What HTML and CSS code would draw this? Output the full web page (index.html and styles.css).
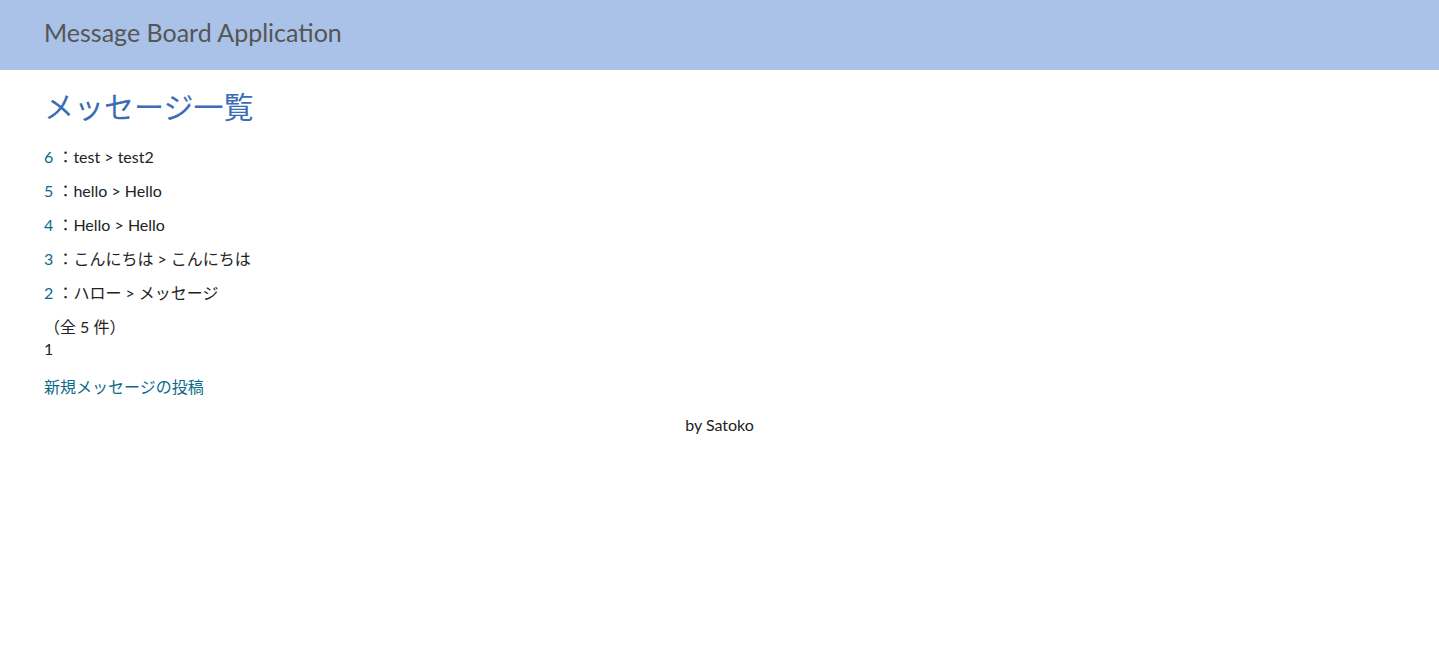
FILE: index.html
```html
<!DOCTYPE html>
<html lang="ja">
<head>
<meta charset="utf-8">
<title>Message Board Application</title>
<link rel="stylesheet" href="styles.css">
</head>
<body>
<header class="topbar">
  <span class="brand">Message Board Application</span>
</header>
<main class="content">
  <h1 class="title">メッセージ一覧</h1>
  <ul class="messages">
    <li class="msg"><a class="num" href="#">6</a> ：test &gt; test2</li>
    <li class="msg"><a class="num" href="#">5</a> ：hello &gt; Hello</li>
    <li class="msg"><a class="num" href="#">4</a> ：Hello &gt; Hello</li>
    <li class="msg"><a class="num" href="#">3</a> ：こんにちは &gt; こんにちは</li>
    <li class="msg"><a class="num" href="#">2</a> ：ハロー &gt; メッセージ</li>
  </ul>
  <div class="count">（全 5 件）</div>
  <div class="pages">1</div>
  <p class="newlink"><a href="#">新規メッセージの投稿</a></p>
</main>
<footer class="footer">by Satoko</footer>
</body>
</html>
```
FILE: styles.css
```css
html, body {
  margin: 0;
  padding: 0;
}
body {
  font-family: Lato, "Noto Sans CJK JP", sans-serif;
  font-size: 16px;
  color: #222;
  background: #fff;
}
a {
  color: #0b6a8b;
  text-decoration: none;
}
.topbar {
  height: 70px;
  box-sizing: border-box;
  background: #aac2e8;
  display: flex;
  align-items: center;
  padding: 0 0 6px 44px;
}
.brand {
  font-size: 25px;
  color: #555;
}
.content {
  padding: 0 44px;
}
.title {
  margin: 18px 0 0;
  font-size: 30px;
  line-height: 36px;
  font-weight: normal;
  color: #3a6db5;
}
.messages {
  list-style: none;
  margin: 23px 0 0;
  padding: 0;
}
.msg {
  line-height: 20px;
  margin-bottom: 14px;
}
.count {
  line-height: 20px;
  margin-top: 0;
}
.pages {
  line-height: 20px;
  margin-top: 2px;
}
.newlink {
  margin: 18px 0 0;
  line-height: 20px;
}
.footer {
  text-align: center;
  line-height: 20px;
  margin-top: 18px;
}
```
